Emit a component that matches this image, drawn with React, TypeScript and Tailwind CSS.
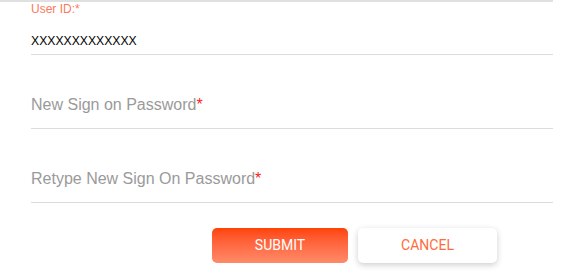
import React from "react";

export default function App() {
  const font = { fontFamily: '"Liberation Sans", Arial, sans-serif' };
  return (
    <div className="w-[583px] h-[278px] bg-white overflow-hidden" style={font}>
      <div className="w-[553px] border-t-2 border-[#e0e0e0] pl-[31px]">
        <div className="text-[12px] leading-[14px] text-[#fa7a5c]">User ID:*</div>
        <div className="mt-[18px] border-b border-[#dcdcdc] pb-[6px]">
          <div className="text-[12.2px] leading-[14px] text-black">XXXXXXXXXXXXX</div>
        </div>
        <div className="mt-[41px] border-b border-[#dcdcdc] pb-[14px]">
          <div className="text-[16px] leading-[18px] text-[#9a9a9a]">
            New Sign on Password<span className="text-[#ff1a1a]">*</span>
          </div>
        </div>
        <div className="mt-[41px] border-b border-[#dcdcdc] pb-[14px]">
          <div className="text-[16px] leading-[18px] text-[#9a9a9a]">
            Retype New Sign On Password<span className="text-[#ff1a1a]">*</span>
          </div>
        </div>
      </div>
      <div className="flex gap-[10px] pl-[212px] mt-[25px]" style={{ fontFamily: 'Roboto, "Liberation Sans", sans-serif' }}>
        <button className="w-[136px] h-[35px] rounded-[5px] bg-gradient-to-b from-[#ff4200] to-[#ff8a68] text-white text-[14px] font-normal">
          SUBMIT
        </button>
        <button className="w-[139px] h-[35px] rounded-[5px] bg-white text-[#ff6b3d] text-[14px] font-normal shadow-[0_2px_6px_rgba(0,0,0,0.2)]">
          CANCEL
        </button>
      </div>
    </div>
  );
}
